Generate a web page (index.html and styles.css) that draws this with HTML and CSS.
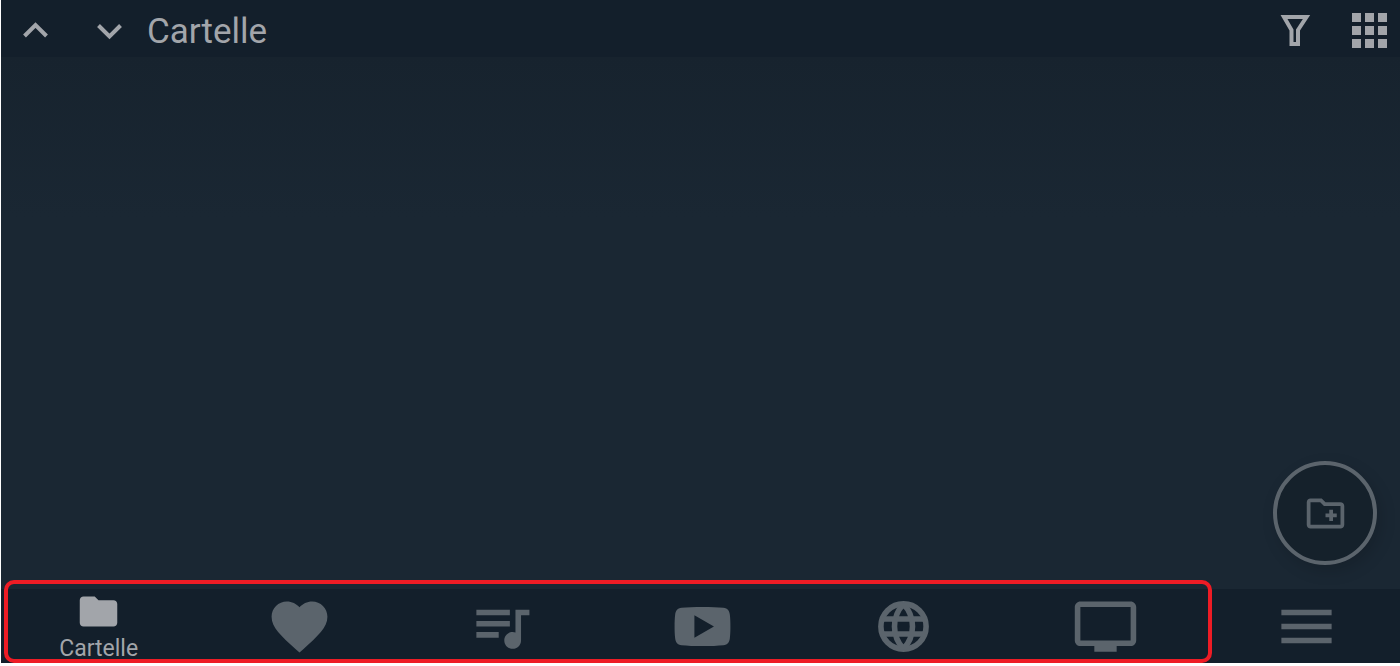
FILE: index.html
```html
<!DOCTYPE html>
<html lang="it">
<head>
    <meta charset="UTF-8">
    <meta name="viewport" content="width=device-width, initial-scale=1.0">
    <title>Cartelle</title>
    <link rel="stylesheet" href="styles.css">
</head>
<body>
    <div class="app">
        <header class="topbar">
            <button class="icon-btn" type="button" aria-label="Su">
                <svg class="icon" viewBox="0 0 48 48"><path class="line" d="M13.500 29l11-11 11 11"/></svg>
            </button>
            <button class="icon-btn" type="button" aria-label="Giù">
                <svg class="icon" viewBox="0 0 48 48"><path class="line" d="M13.500 18.500l11 11 11-11"/></svg>
            </button>
            <h1>Cartelle</h1>
            <button class="icon-btn" type="button" aria-label="Filtro">
                <svg class="icon" viewBox="0 0 48 48"><path class="line" d="M12 10h22.500L26 23v14h-6.500V23z"/></svg>
            </button>
            <button class="icon-btn" type="button" aria-label="Griglia">
                <svg class="icon" viewBox="0 0 48 48"><path d="M6 6h9v9H6zM19 6h9v9h-9zM32 6h9v9h-9zM6 19h9v9H6zM19 19h9v9h-9zM32 19h9v9h-9zM6 32h9v9H6zM19 32h9v9h-9zM32 32h9v9h-9z"/></svg>
            </button>
        </header>

        <main class="content">
            <button class="fab" type="button" aria-label="Nuova cartella">
                <svg class="icon" viewBox="0 0 24 24"><path d="M20 6h-8l-2-2H4c-1.110 0-1.990.89-1.990 2L2 18c0 1.110.89 2 2 2h16c1.110 0 2-.89 2-2V8c0-1.110-.89-2-2-2zm0 12H4V6h5.170l2 2H20v10zm-8-4h2v2h2v-2h2v-2h-2v-2h-2v2h-2z"/></svg>
            </button>
        </main>

        <footer class="bottom">
            <nav class="tabs">
                <a class="tab active" href="#cartelle">
                    <svg class="icon" viewBox="0 0 24 24"><path d="M10 4H4c-1.100 0-1.990.9-1.990 2L2 18c0 1.100.9 2 2 2h16c1.100 0 2-.9 2-2V8c0-1.100-.9-2-2-2h-8z"/></svg>
                    <span>Cartelle</span>
                </a>
                <a class="tab" href="#preferiti" aria-label="Preferiti">
                    <svg class="icon" viewBox="0 0 24 24"><path d="m12 21.350-1.450-1.320C5.400 15.360 2 12.280 2 8.500 2 5.420 4.420 3 7.500 3c1.740 0 3.410.81 4.500 2.090C13.090 3.810 14.760 3 16.500 3 19.580 3 22 5.420 22 8.500c0 3.780-3.400 6.860-8.550 11.540z"/></svg>
                </a>
                <a class="tab" href="#playlist" aria-label="Playlist">
                    <svg class="icon" viewBox="0 0 24 24"><path d="M15 6H3v2h12V6zm0 4H3v2h12v-2zM3 16h8v-2H3v2zM17 6v8.180c-.31-.11-.65-.18-1-.18-1.660 0-3 1.340-3 3s1.340 3 3 3 3-1.340 3-3V8h3V6h-5z"/></svg>
                </a>
                <a class="tab" href="#video" aria-label="Video">
                    <svg class="icon" viewBox="0 0 24 24"><path d="M12 5c3 0 5.500.1 7.500.3 1.500.2 2.100 1 2.300 2.500.15 1.200.2 2.600.2 4.200s-.05 3-.2 4.200c-.2 1.500-.8 2.300-2.300 2.500-2 .2-4.500.3-7.500.3s-5.500-.1-7.500-.3c-1.500-.2-2.100-1-2.300-2.500C2.050 15 2 13.600 2 12s.05-3 .2-4.200C2.400 6.300 3 5.500 4.500 5.300 6.500 5.100 9 5 12 5zM9.100 8v8l7-4z"/></svg>
                </a>
                <a class="tab" href="#web" aria-label="Web">
                    <svg class="icon" viewBox="0 0 24 24">
                        <g class="globe">
                            <circle cx="12" cy="12" r="8.100"/>
                            <path d="M4.500 9.300h15M4.500 14.700h15M12 4C7.700 8.500 7.700 15.500 12 20M12 4c4.300 4.500 4.300 11.500 0 16"/>
                        </g>
                    </svg>
                </a>
                <a class="tab" href="#tv" aria-label="TV">
                    <svg class="icon" viewBox="0 0 24 24"><path d="M21 3H3c-1.100 0-2 .9-2 2v12c0 1.100.9 2 2 2h5v2h8v-2h5c1.100 0 2-.9 2-2V5c0-1.100-.9-2-2-2zm0 14H3V5h18v12z"/></svg>
                </a>
                <button class="tab" type="button" aria-label="Menu">
                    <svg class="icon" viewBox="0 0 24 24"><path d="M3 6h18v2H3zM3 11h18v2H3zM3 16h18v2H3z"/></svg>
                </button>
            </nav>
            <div class="highlight"></div>
        </footer>
    </div>
</body>
</html>
```
FILE: styles.css
```css
* {
    box-sizing: border-box;
}

body {
    margin: 0;
    padding: 0 0 3px 1px;
    background-color: #fff;
    font-family: Roboto, sans-serif;
}

.app {
    display: flex;
    flex-direction: column;
    height: calc(100vh - 3px);
    overflow: hidden;
    background-color: #1a2733;
    color: #a2a5aa;
}

.icon {
    display: block;
    flex: none;
    width: 100%;
    fill: currentColor;
}

/* Top bar */
.topbar {
    display: flex;
    align-items: flex-start;
    gap: 26px;
    padding: 7px 6px 0 10px;
    background-color: #131f2b;
}

.topbar h1 {
    flex: 1;
    margin: 0 0 0 -12px;
    font-size: 35px;
    font-weight: 400;
    line-height: 50px;
}

.icon-btn {
    width: 48px;
    padding: 0;
    border: none;
    background: none;
    color: inherit;
    cursor: pointer;
}

.line {
    fill: none;
    stroke: currentColor;
    stroke-width: 4;
}

/* Content */
.content {
    display: flex;
    flex: 1;
    align-items: flex-end;
    justify-content: flex-end;
    padding: 24px 23px;
    background: linear-gradient(#17232e, #1a2733 160px);
}

.fab {
    display: flex;
    align-items: center;
    justify-content: center;
    width: 104px;
    height: 104px;
    padding: 0;
    border: 4px solid #5b646c;
    border-radius: 50%;
    background-color: #15212b;
    box-shadow: 4px 6px 16px rgba(0, 0, 0, 0.15);
    color: #5b646c;
    cursor: pointer;
}

.fab .icon {
    width: 45px;
}

/* Bottom navigation */
.bottom {
    position: relative;
    background-color: #131f2b;
}

.tabs {
    display: grid;
    grid-template-columns: repeat(7, 1fr);
    height: 74px;
    margin: 0 -7px 0 -3px;
}

.tab {
    display: flex;
    flex-direction: column;
    align-items: center;
    justify-content: center;
    padding: 0;
    border: none;
    background: none;
    color: #5b646c;
    text-decoration: none;
    cursor: pointer;
}

.tab .icon {
    width: 67px;
}

.tab.active {
    color: #a2a5aa;
    font-size: 23px;
    line-height: 30px;
}

.tab.active .icon {
    width: 45px;
}

.globe {
    fill: none;
    stroke: currentColor;
    stroke-width: 2;
}

/* Red frame around the tabs */
.highlight {
    position: absolute;
    top: -9px;
    right: 188px;
    bottom: 0;
    left: 3px;
    border: 4px solid #ee1c25;
    border-radius: 10px;
    pointer-events: none;
}
```
